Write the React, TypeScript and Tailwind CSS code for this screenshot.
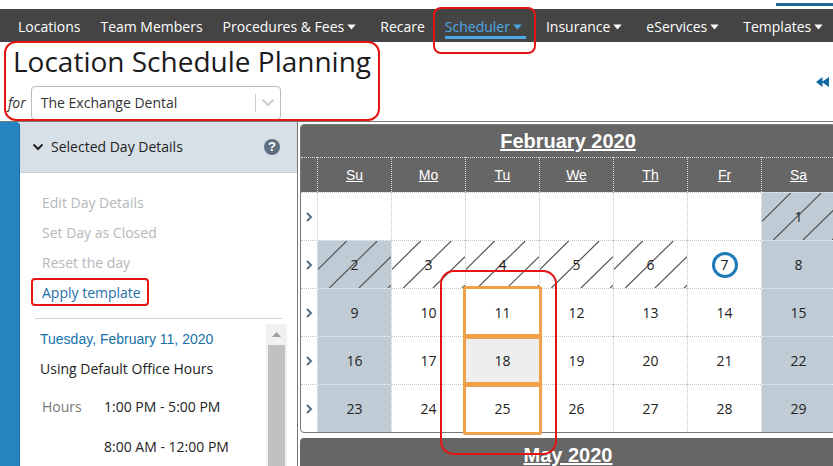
import { clsx } from 'clsx'

type Day = {
  n: number
  hatched?: boolean
  today?: boolean
  picked?: boolean
  active?: boolean
}

const navItems = [
  { label: 'Locations' },
  { label: 'Team Members' },
  { label: 'Procedures & Fees', menu: true },
  { label: 'Recare' },
  { label: 'Scheduler', menu: true, current: true },
  { label: 'Insurance', menu: true },
  { label: 'eServices', menu: true },
  { label: 'Templates', menu: true },
]

const weekdays = ['Su', 'Mo', 'Tu', 'We', 'Th', 'Fr', 'Sa']

const february: (Day | null)[][] = [
  [null, null, null, null, null, null, { n: 1, hatched: true }],
  [
    { n: 2, hatched: true },
    { n: 3, hatched: true },
    { n: 4, hatched: true },
    { n: 5, hatched: true },
    { n: 6, hatched: true },
    { n: 7, today: true },
    { n: 8 },
  ],
  [{ n: 9 }, { n: 10 }, { n: 11, picked: true }, { n: 12 }, { n: 13 }, { n: 14 }, { n: 15 }],
  [{ n: 16 }, { n: 17 }, { n: 18, picked: true, active: true }, { n: 19 }, { n: 20 }, { n: 21 }, { n: 22 }],
  [{ n: 23 }, { n: 24 }, { n: 25, picked: true }, { n: 26 }, { n: 27 }, { n: 28 }, { n: 29 }],
]

function Callout({ className }: { className: string }) {
  return <div className={clsx('pointer-events-none absolute z-20 border-2 border-[#e31515]', className)} />
}

function Caret() {
  return (
    <svg width="9" height="6" viewBox="0 0 9 6" fill="currentColor" aria-hidden="true">
      <path d="M.3.5h8.4L4.5 5.5z" />
    </svg>
  )
}

function Nav() {
  return (
    <nav className="flex h-[33px] items-center gap-5 bg-[#444] pt-0.5 pl-[18px] text-sm text-white">
      {navItems.map(({ label, menu, current }) => (
        <a
          key={label}
          href="#"
          className={clsx('relative flex shrink-0 items-center gap-[3px] leading-5', menu && 'pr-1', current && 'text-[#4da9e4]')}
        >
          {label}
          {menu && <Caret />}
          {current && (
            <>
              <span className="absolute inset-x-0 -bottom-0.5 h-[3px] bg-[#4da9e4]" />
              <Callout className="-top-[10px] -right-[10px] -bottom-[17px] -left-3 rounded-lg" />
            </>
          )}
        </a>
      ))}
    </nav>
  )
}

function PageHeader() {
  return (
    <header className="flex h-[79px] items-center justify-between pr-1">
      <div className="relative w-[380px] pl-2">
        <h1 className="pl-[5px] text-[28px] leading-9 whitespace-nowrap text-[#1b1b1b]">Location Schedule Planning</h1>
        <div className="flex items-center gap-[5px] pt-[7px] text-sm">
          <label htmlFor="location" className="text-[#333] italic">for</label>
          <div className="relative w-[250px]">
            <select
              id="location"
              className="h-[34px] w-full appearance-none rounded border border-[#bbb] bg-white pr-8 pl-[9px] text-sm text-[#333]"
            >
              <option>The Exchange Dental</option>
            </select>
            <div className="pointer-events-none absolute inset-y-2 right-0 flex w-[26px] items-center justify-center border-l border-[#ccc] text-[#ccc]">
              <svg width="12" height="8" viewBox="0 0 12 8" fill="none" stroke="currentColor" strokeWidth="2" strokeLinecap="round">
                <path d="M1.2 1.2 6 6l4.800-4.800" />
              </svg>
            </div>
          </div>
        </div>
        <Callout className="-top-0.5 right-0 -bottom-px left-1 rounded-[12px]" />
      </div>
      <button type="button" aria-label="Previous months" className="text-[#0f6ba3]">
        <svg width="13" height="10" viewBox="0 0 13 10" fill="currentColor">
          <path d="M6.500 0v10L0 5zM13 0v10L5.800 5z" />
        </svg>
      </button>
    </header>
  )
}

function Sidebar() {
  return (
    <aside className="flex w-[278px] shrink-0 flex-col border-r border-[#777] text-sm">
      <div className="flex h-[51px] items-center border-b border-[#c9d1d8] bg-[#d8e0e7] pr-[17px] pl-3">
        <button type="button" className="flex items-center gap-[7px] text-[#222]">
          <svg width="12" height="8" viewBox="0 0 12 8" fill="none" stroke="currentColor" strokeWidth="2">
            <path d="m1.500 1.500 4.500 4.500 4.500-4.500" />
          </svg>
          Selected Day Details
        </button>
        <button type="button" aria-label="Help" className="ml-auto flex size-4 items-center justify-center rounded-full bg-[#5d6f80] font-['Liberation_Sans'] text-[13px] font-bold text-white">
          ?
        </button>
      </div>

      <div className="mx-[15px] flex flex-col items-start gap-2.5 border-b border-[#cdd5da] pt-5 pb-[15px] pl-[7px] leading-5">
        <button type="button" disabled className="text-[#b5b8ba]">Edit Day Details</button>
        <button type="button" disabled className="text-[#b5b8ba]">Set Day as Closed</button>
        <button type="button" disabled className="text-[#b5b8ba]">Reset the day</button>
        <button type="button" className="relative text-[#1f6fa8]">
          Apply template
          <Callout className="-top-[5px] -right-2 -bottom-[3px] -left-[11px] rounded" />
        </button>
      </div>

      <div className="flex min-h-0 flex-1 pt-[5px] pr-[10px] pl-5 leading-5">
        <div className="flex-1 overflow-hidden pt-[5px]">
          <p className="font-['Liberation_Sans'] text-[#1571a8]">Tuesday, February 11, 2020</p>
          <p className="pt-2.5 text-[#222]">Using Default Office Hours</p>
          <dl className="flex pt-[18px]">
            <dt className="w-16 pl-0.5 text-[#777]">Hours</dt>
            <dd className="flex flex-col gap-5 text-[#222]">
              <span>1:00 PM - 5:00 PM</span>
              <span>8:00 AM - 12:00 PM</span>
            </dd>
          </dl>
        </div>
        <div className="flex w-[21px] flex-col items-center bg-[#f1f1f1]">
          <div className="flex h-[21px] shrink-0 items-center text-[#a0a0a0]">
            <svg width="9" height="5" viewBox="0 0 9 5" fill="currentColor">
              <path d="M0 5h9L4.500 0z" />
            </svg>
          </div>
          <div className="w-[17px] flex-1 bg-[#c1c1c1]" />
        </div>
      </div>
    </aside>
  )
}

function Hatch() {
  return (
    <svg className="absolute inset-0 size-full" viewBox="0 0 74 48" preserveAspectRatio="none" stroke="#555" strokeWidth="1.200">
      <path d="M0 29 29 0M11.500 48 60 0M41.500 48 74 16M71 48l3-3" />
    </svg>
  )
}

function DayCell({ day, column }: { day: Day | null; column: number }) {
  const shaded = day && (column === 0 || column === 6)

  return (
    <td
      className={clsx(
        'relative border-t border-l border-dotted p-0 text-center',
        shaded ? 'border-[#eef1f4] bg-[#bfccd6]' : 'border-[#c4c4c4]',
        day?.active && 'bg-[#eee]',
      )}
    >
      {day?.hatched && <Hatch />}
      {day && (
        <button
          type="button"
          className={clsx('relative leading-5', day.today && 'size-[26px] rounded-full border-3 border-[#1f7bb8]')}
        >
          {day.n}
        </button>
      )}
      {day?.picked && <div className="pointer-events-none absolute -inset-[3px] z-10 rounded-xs border-3 border-[#f0a04b]" />}
      {day?.n === 11 && <Callout className="-top-[19px] -right-[18px] -left-[26px] h-[185px] rounded-[14px]" />}
    </td>
  )
}

function MonthTitle({ children }: { children: string }) {
  return (
    <a href="#" className="font-['Liberation_Sans'] text-xl leading-6 font-bold text-white underline">
      {children}
    </a>
  )
}

function Calendar() {
  return (
    <section className="-mr-[3px] flex min-w-0 flex-1 flex-col gap-[5px] pt-0.5 pl-0.5">
      <table className="w-full table-fixed border-separate border-spacing-0 rounded border border-[#777] text-sm text-[#222]">
        <colgroup>
          <col className="w-4" />
          {weekdays.map(d => <col key={d} />)}
        </colgroup>
        <thead className="bg-[#666] text-white">
          <tr className="h-8">
            <th colSpan={8} className="rounded-t-xs p-0">
              <MonthTitle>February 2020</MonthTitle>
            </th>
          </tr>
          <tr className="h-[35px]">
            <th className="border-t border-dotted border-[#ddd] p-0" />
            {weekdays.map(d => (
              <th key={d} className="border-t border-l border-dotted border-[#ddd] p-0 font-['Liberation_Sans'] font-normal underline">
                {d}
              </th>
            ))}
          </tr>
        </thead>
        <tbody>
          {february.map((week, i) => (
            <tr key={i} className="h-12">
              <td className="border-t border-dotted border-[#c4c4c4] p-0">
                <button type="button" aria-label="Select week" className="flex w-full justify-center text-[#5d6f80]">
                  <svg width="7" height="10" viewBox="0 0 7 10" fill="none" stroke="currentColor" strokeWidth="2">
                    <path d="m1 1 4 4-4 4" />
                  </svg>
                </button>
              </td>
              {week.map((day, column) => <DayCell key={column} day={day} column={column} />)}
            </tr>
          ))}
        </tbody>
      </table>
      <div className="flex h-[34px] shrink-0 items-center justify-center rounded-t bg-[#666]">
        <MonthTitle>May 2020</MonthTitle>
      </div>
    </section>
  )
}

export default function App() {
  return (
    <div className="flex h-screen flex-col overflow-hidden bg-white font-['Open_Sans',sans-serif]">
      <div className="flex h-[9px] shrink-0 justify-end pt-[3px]">
        <div className="h-[3px] w-[57px] bg-[#1f6a96]" />
      </div>
      <Nav />
      <PageHeader />
      <main className="flex min-h-0 flex-1 overflow-hidden border-t border-[#777]">
        <div className="w-5 shrink-0 rounded-tr border-r border-[#1a6ea5] bg-[#2685c1]" />
        <Sidebar />
        <Calendar />
      </main>
    </div>
  )
}
